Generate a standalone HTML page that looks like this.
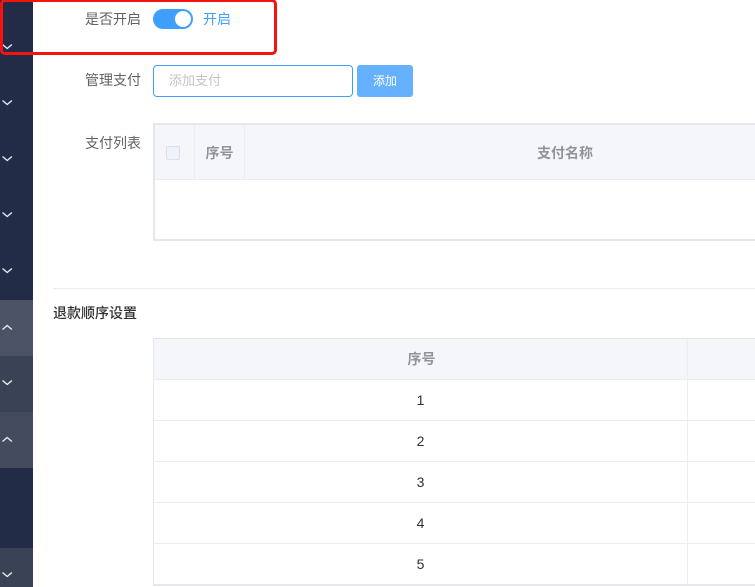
<!DOCTYPE html>
<html><head><meta charset="utf-8">
<style>
html,body{margin:0;padding:0;background:#fff}
body{position:relative;width:755px;height:587px;overflow:hidden;font-family:"Liberation Sans","Noto Sans CJK SC",sans-serif;font-size:14px;color:#606266}
div,span{position:absolute;box-sizing:border-box}
.t{white-space:nowrap;line-height:20px}
.th{font-weight:700;color:#909399;text-align:center;line-height:20px;white-space:nowrap}
.n{left:154px;width:533px;text-align:center;color:#303133;font-size:14px;line-height:20px}
svg{position:absolute}
</style></head>
<body>
<div style="left:0;top:0;width:33px;height:587px;background:#222c46"></div>
<div style="left:0;top:300px;width:33px;height:56px;background:#4d5366"></div>
<div style="left:0;top:356px;width:33px;height:56px;background:#3a4256"></div>
<div style="left:0;top:412px;width:33px;height:56px;background:#444b5e"></div>
<div style="left:0;top:548px;width:33px;height:39px;background:#3a4256"></div>

<svg style="left:0;top:0" width="33" height="587" fill="none" stroke="#e6ebf1" stroke-width="1.4">
<path d="M2.5 44.5l4.7 4 4.7-4"/>
<path d="M2.5 100.5l4.7 4 4.7-4"/>
<path d="M2.5 156.5l4.7 4 4.7-4"/>
<path d="M2.5 212.5l4.7 4 4.7-4"/>
<path d="M2.5 268.5l4.7 4 4.7-4"/>
<path d="M2.5 329.5l4.7-4 4.7 4"/>
<path d="M2.5 380.5l4.7 4 4.7-4"/>
<path d="M2.5 441.5l4.7-4 4.7 4"/>
<path d="M2.5 572.5l4.7 4 4.7-4"/>
</svg>

<div style="left:0;top:-1px;width:277px;height:56px;border:3px solid #f5130f;border-radius:5px"></div>

<div class="t" style="left:85px;top:9px">是否开启</div>
<div style="left:153px;top:9px;width:40px;height:20px;border-radius:10px;background:#409eff"></div>
<div style="left:175px;top:11px;width:16px;height:16px;border-radius:50%;background:#fff"></div>
<div class="t" style="left:203px;top:9px;color:#409eff">开启</div>

<div class="t" style="left:85px;top:70px">管理支付</div>
<div style="left:153px;top:65px;width:200px;height:32px;border:1px solid #409eff;border-radius:4px;background:#fff"></div>
<div class="t" style="left:169px;top:71px;color:#c0c4cc;font-size:13px">添加支付</div>
<div style="left:357px;top:65px;width:56px;height:32px;border-radius:3px;background:#66b1ff"></div>
<div class="t" style="left:373px;top:71px;color:#fff;font-size:12px">添加</div>

<div class="t" style="left:85px;top:133px">支付列表</div>
<div style="left:153px;top:123px;width:602px;height:2px;background:#e6e7eb"></div>
<div style="left:153px;top:123px;width:2px;height:118px;background:#e6e7eb"></div>
<div style="left:153px;top:239px;width:602px;height:2px;background:#e6e7eb"></div>
<div style="left:155px;top:125px;width:600px;height:54px;background:#f5f6fa"></div>
<div style="left:155px;top:179px;width:600px;height:1px;background:#ebedf3"></div>
<div style="left:194px;top:125px;width:1px;height:54px;background:#ebedf3"></div>
<div style="left:244px;top:125px;width:1px;height:54px;background:#ebedf3"></div>
<div style="left:166px;top:146px;width:14px;height:14px;border:1px solid #dcdfe6;border-radius:2px;background:#edf2fc"></div>
<div class="th" style="left:195px;top:143px;width:49px">序号</div>
<div class="th" style="left:245px;top:143px;width:640px">支付名称</div>

<div style="left:53px;top:288px;width:702px;height:1px;background:#ebebf0"></div>
<div class="t" style="left:53px;top:303px;color:#303133;font-weight:500">退款顺序设置</div>

<div style="left:153px;top:338px;width:602px;height:1px;background:#e4e4e6"></div>
<div style="left:153px;top:338px;width:1px;height:248px;background:#e8e9ee"></div>
<div style="left:154px;top:339px;width:601px;height:40px;background:#f5f6fa"></div>
<div style="left:154px;top:379px;width:601px;height:1px;background:#ebedf3"></div>
<div style="left:154px;top:420px;width:601px;height:1px;background:#ebedf3"></div>
<div style="left:154px;top:461px;width:601px;height:1px;background:#ebedf3"></div>
<div style="left:154px;top:502px;width:601px;height:1px;background:#ebedf3"></div>
<div style="left:154px;top:543px;width:601px;height:1px;background:#ebedf3"></div>
<div style="left:153px;top:584px;width:602px;height:2px;background:#e6e7eb"></div>
<div style="left:687px;top:339px;width:1px;height:245px;background:#ebedf3"></div>
<div class="th" style="left:155px;top:349px;width:533px">序号</div>
<div class="n" style="top:390px">1</div>
<div class="n" style="top:431px">2</div>
<div class="n" style="top:472px">3</div>
<div class="n" style="top:513px">4</div>
<div class="n" style="top:554px">5</div>
</body></html>
